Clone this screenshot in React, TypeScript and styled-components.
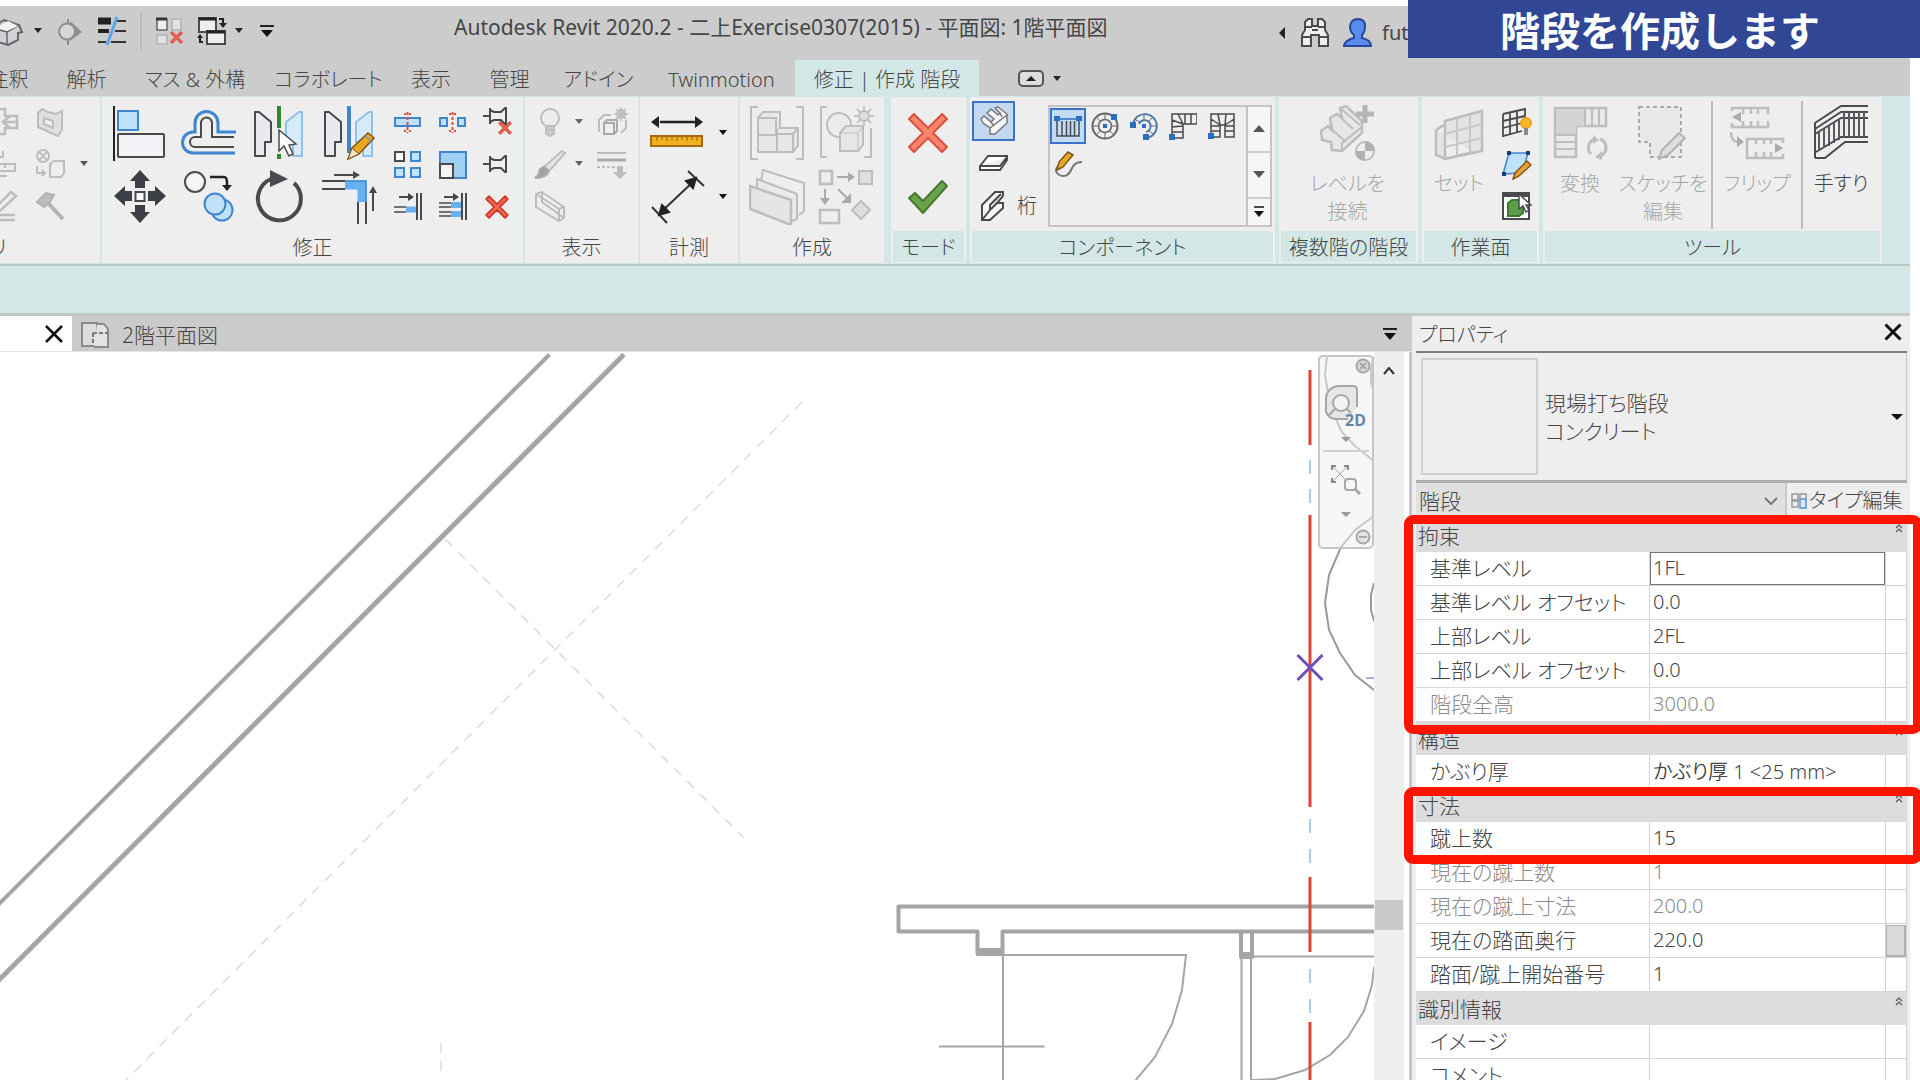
import React from "react";
import styled, { createGlobalStyle, css } from "styled-components";

const Global = createGlobalStyle`
  * { box-sizing: border-box; }
  html, body { margin: 0; padding: 0; background: #fff; }
  body { overflow: hidden; }
  button, input, select {
    font: inherit; color: inherit; margin: 0; padding: 0;
    border: 0; background: none; border-radius: 0; text-align: left;
  }
  body, button, input, select {
    font-family: "Noto Sans", "Noto Sans CJK JP", sans-serif;
    font-feature-settings: "palt";
  }
`;

const mint = "#d3e8e6";
const ink = "#454545";

const App = styled.div`
  position: relative;
  height: 100vh;
  overflow: hidden;
  padding: 6px 10px 0 0;
  display: flex;
  flex-direction: column;
  color: ${ink};
  font-size: 20px;
  line-height: 28px;
  font-weight: 300;
`;

/* ---------- title bar ---------- */
const TitleBar = styled.header`
  flex: none;
  height: 54px;
  display: flex;
  align-items: center;
  background: #cccccc;
`;
const QuickButton = styled.button<{ $w: number }>`
  flex: none;
  width: ${(p) => p.$w}px;
  height: 40px;
  display: flex;
  align-items: center;
  justify-content: center;
`;
const QuickTools = styled.div`
  flex: none;
  display: flex;
  align-items: center;
  width: 455px;
  margin: 0 0 4px -10px;
`;
const QuickRule = styled.span`
  width: 2px;
  height: 38px;
  margin-left: 4px;
  background: #bdbdbd;
`;
const WindowTitle = styled.h1`
  margin: 0 auto 12px 9px;
  font-size: 21px;
  line-height: 28px;
  font-weight: 400;
  white-space: nowrap;
`;
const Account = styled.div`
  flex: none;
  display: flex;
  align-items: center;
  width: 640px;
  span { padding-left: 2px; font-weight: 400; }
`;

/* ---------- tabs ---------- */
const Tabs = styled.nav`
  flex: none;
  height: 36px;
  display: flex;
  background: #cccccc;
`;
const TabStrip = styled.div`
  display: flex;
  margin-left: -31px;
`;
const Tab = styled.button<{ $w: number; $on?: boolean }>`
  flex: none;
  width: ${(p) => p.$w}px;
  text-align: center;
  white-space: nowrap;
  padding-top: 4px;
  font-weight: 300;
  background: ${(p) => (p.$on ? mint : "transparent")};
`;
const TabMenu = styled.button`
  display: flex;
  align-items: center;
  gap: 8px;
  margin-left: 39px;
  padding-top: 2px;
`;

/* ---------- ribbon ---------- */
const Ribbon = styled.section`
  flex: none;
  height: 170px;
  padding-top: 1px;
  display: flex;
  align-items: flex-start;
  gap: 2px;
  background: ${mint};
  border-bottom: 2px solid #b7c8c7;
`;
const ContextPanels = styled.div`
  display: flex;
  gap: 4px;
  margin-left: 5px;
`;
const PanelBox = styled.div<{ $w: number; $cut?: boolean }>`
  flex: none;
  width: ${(p) => p.$w}px;
  height: 166px;
  display: flex;
  flex-direction: column;
  background: #eeeeee;
  ${(p) => p.$cut && css`margin-left: -174px;`}
`;
const PanelBody = styled.div`
  height: 134px;
  display: flex;
  padding: 4px 3px 0 2px;
`;
const PanelTitle = styled.div<{ $context?: boolean }>`
  height: 31px;
  margin: 0 2px;
  text-align: center;
  white-space: nowrap;
  line-height: 34px;
  background: ${(p) => (p.$context ? mint : "transparent")};
`;
const BigGrid = styled.div<{ $cols: string }>`
  display: grid;
  grid-template-columns: ${(p) => p.$cols};
  grid-template-rows: 64px 64px;
`;
const SmallGrid = styled.div<{ $cols: string }>`
  display: grid;
  grid-template-columns: ${(p) => p.$cols};
  grid-template-rows: repeat(3, 42px);
`;
const ToolButton = styled.button`
  display: flex;
  align-items: center;
  justify-content: center;
`;
const Spacer = styled.span`
  flex: 1;
`;
const LabeledTool = styled.button<{ $w: number; $off?: boolean; $rule?: boolean }>`
  flex: none;
  width: ${(p) => p.$w}px;
  height: 128px;
  display: flex;
  flex-direction: column;
  align-items: center;
  text-align: center;
  white-space: pre-line;
  font-weight: 300;
  padding-top: 4px;
  color: ${(p) => (p.$off ? "#a6a6a6" : ink)};
  border-left: ${(p) => (p.$rule ? "2px solid #bebebe" : "0")};
  svg { flex: none; margin-bottom: 9px; }
`;
const ComponentList = styled.div`
  width: 76px;
  display: flex;
  flex-direction: column;
`;
const ComponentButton = styled.button<{ $on?: boolean }>`
  height: ${(p) => (p.$on ? 40 : 43)}px;
  width: ${(p) => (p.$on ? 43 : 74)}px;
  display: flex;
  align-items: center;
  gap: 8px;
  padding-left: 5px;
  ${(p) => p.$on && css`background: #c3d9f1; border: 2px solid #3a74c8; padding-left: 4px;`}
`;
const Gallery = styled.div`
  width: 224px;
  height: 122px;
  margin-top: 4px;
  display: flex;
  border: 2px solid #c4c4c4;
`;
const GalleryItems = styled.div`
  flex: 1;
  display: grid;
  grid-template-columns: 37px 39px 39px 39px 39px;
  grid-auto-rows: 39px;
  padding-top: 1px;
`;
const GalleryItem = styled.button<{ $on?: boolean }>`
  width: 36px;
  height: 36px;
  display: flex;
  align-items: center;
  justify-content: center;
  ${(p) => p.$on && css`background: #c3dcf5; border: 2px solid #3a74c8;`}
`;
const GalleryScroll = styled.div`
  width: 24px;
  display: grid;
  grid-template-rows: 44px 46px 1fr;
  border-left: 2px solid #c4c4c4;
  button {
    display: flex; align-items: center; justify-content: center;
    background: #f6f6f6;
  }
  button + button { border-top: 2px solid #cfcfcf; }
`;
const OptionsBar = styled.div`
  flex: none;
  height: 47px;
  background: ${mint};
`;

/* ---------- work area ---------- */
const Work = styled.main`
  flex: 1;
  min-height: 0;
  display: flex;
`;
const ViewColumn = styled.section`
  flex: 1;
  min-width: 0;
  display: flex;
  flex-direction: column;
`;
const DocBar = styled.div`
  flex: none;
  height: 39px;
  display: flex;
  background: #cbcbcb;
  border-top: 3px solid #c2c6c6;
  border-bottom: 1px solid #e4e4e4;
`;
const DocTab = styled.div<{ $on?: boolean }>`
  display: flex;
  align-items: center;
  gap: 12px;
  padding: 2px 0 0 8px;
  font-size: 21px;
  ${(p) =>
    p.$on &&
    css`width: 72px; background: #fff; justify-content: flex-end; padding-right: 9px;`}
`;
const DocMenu = styled.button`
  margin: 0 14px 0 auto;
`;
const ViewRow = styled.div`
  flex: 1;
  min-height: 0;
  display: flex;
`;
const Canvas = styled.div`
  position: relative;
  flex: 1;
  min-width: 0;
  background: #fff;
  > svg { display: block; width: 100%; height: 100%; }
`;
const NavBar = styled.div`
  position: absolute;
  top: 3px;
  right: 0;
  width: 56px;
  height: 194px;
  border: 2px solid #c6c6c6;
  border-radius: 5px;
  background: rgba(238, 238, 238, 0.55);
  svg { display: block; }
`;
const ScrollBar = styled.div`
  flex: none;
  width: 30px;
  display: flex;
  flex-direction: column;
  align-items: center;
  background: #efefef;
`;
const ScrollUp = styled.button`
  width: 30px;
  height: 38px;
  display: flex;
  align-items: center;
  justify-content: center;
`;
const ScrollThumb = styled.span`
  width: 28px;
  height: 30px;
  margin-top: 510px;
  background: #c9c9c9;
`;
const Splitter = styled.div`
  flex: none;
  width: 8px;
  background: #fff;
  border-right: 3px solid #c8c8cb;
`;

/* ---------- properties ---------- */
const Properties = styled.aside`
  flex: none;
  width: 498px;
  display: flex;
  flex-direction: column;
  padding: 0 3px 0 4px;
  background: #eeeeee;
  border-top: 3px solid #c6c8c8;
`;
const PropHeader = styled.div`
  flex: none;
  height: 37px;
  display: flex;
  align-items: center;
  justify-content: space-between;
  padding: 2px 4px 0 3px;
  border-bottom: 2px solid #7d7d7d;
  h2 { margin: 0; font-size: 20px; font-weight: 300; }
`;
const TypeButton = styled.button`
  flex: none;
  height: 130px;
  display: flex;
  align-items: center;
  padding: 0 3px 0 5px;
  border: solid #c4c4c4;
  border-width: 0 1px 3px 0;
  border-bottom-color: #adadad;
`;
const Thumb = styled.span`
  width: 117px;
  height: 117px;
  margin-right: 7px;
  border: 2px solid #cfcfcf;
`;
const TypeName = styled.span`
  flex: 1;
  font-weight: 300;
  line-height: 28px;
  font-size: 21px;
`;
const FilterRow = styled.div`
  flex: none;
  height: 36px;
  display: flex;
`;
const FilterBox = styled.label`
  flex: 1;
  display: flex;
  align-items: center;
  padding: 0 7px 0 3px;
  background: #e0e0e0;
  border-right: 2px solid #c9c9c9;
  select { flex: 1; appearance: none; font-weight: 300; font-size: 21px; outline: 0; }
`;
const EditType = styled.button`
  width: 120px;
  display: flex;
  align-items: center;
  gap: 2px;
  padding-left: 4px;
  font-weight: 300;
  white-space: nowrap;
`;
const TableWrap = styled.div`
  position: relative;
  flex: 1;
`;
const PropTable = styled.table`
  width: 100%;
  table-layout: fixed;
  border-collapse: separate;
  border-spacing: 0;
  background: #fff;
`;
const Section = styled.th`
  height: 33px;
  padding: 0 0 0 2px;
  text-align: left;
  font-weight: 300;
  font-size: 21px;
  line-height: 28px;
  background: #dcdcdc;
  div { display: flex; justify-content: space-between; align-items: center; height: 33px; }
  svg { margin: 0 4px 16px 0; }
`;
const Name = styled.th<{ $off?: boolean }>`
  height: 34px;
  padding: 0 0 2px 14px;
  text-align: left;
  font-weight: 300;
  font-size: 21px;
  line-height: 28px;
  white-space: nowrap;
  border-bottom: 1px solid #d9d9d9;
  color: ${(p) => (p.$off ? "#8b8b8b" : ink)};
`;
const Value = styled.td<{ $off?: boolean; $active?: boolean }>`
  height: 34px;
  padding: 0;
  border-left: 1px solid #d3d3d3;
  border-bottom: 1px solid #d9d9d9;
  color: ${(p) => (p.$off ? "#8b8b8b" : ink)};
  input {
    display: block; width: 100%; height: 33px; padding: 0 0 2px 3px;
    font-weight: 350; outline: 0;
    ${(p) => p.$active && css`border: 1px solid #757575; padding-left: 2px;`}
  }
`;
const Extra = styled.td`
  padding: 0;
  border: solid #d3d3d3;
  border-width: 0 1px 1px 1px;
  button {
    display: block; width: 100%; height: 32px;
    background: #dadada; border: solid #b0b0b0; border-width: 1px 2px 2px 1px;
  }
`;
const Highlight = styled.div<{ $top: number; $h: number }>`
  position: absolute;
  left: -12px;
  right: -15px;
  top: ${(p) => p.$top}px;
  height: ${(p) => p.$h}px;
  border: 9px solid #ff1400;
  border-radius: 9px;
  pointer-events: none;
`;
const Caption = styled.div`
  position: absolute;
  top: 0;
  right: 0;
  width: 512px;
  height: 58px;
  padding: 6px 8px 0 0;
  text-align: center;
  font-size: 40px;
  line-height: 50px;
  font-weight: 700;
  font-feature-settings: normal;
  color: #fff;
  background: #314796;
`;

/* ---------- icons ---------- */
type IcProps = { w?: number; h?: number; children: React.ReactNode };
const Ic = ({ w = 32, h = w, children }: IcProps) => (
  <svg width={w} height={h} viewBox={`0 0 ${w} ${h}`} fill="none" stroke="#4a4a4e" strokeWidth="2" aria-hidden="true">
    {children}
  </svg>
);
const Down = ({ c = "#222" }: { c?: string }) => (
  <Ic w={10} h={6}><path d="M1 0H9L5 5Z" fill={c} stroke="none" /></Ic>
);
const Up = () => <Ic w={12} h={8}><path d="M0 7H12L6 0Z" fill="#555" stroke="none" /></Ic>;
const MenuDown = () => (
  <Ic w={16} h={14}><path d="M1 2H15" strokeWidth="2" stroke="#222" /><path d="M2 6H14L8 13Z" fill="#111" stroke="none" /></Ic>
);
const Cross = () => (
  <Ic w={20}><path d="M2.500 2.500L17.500 17.500M17.500 2.500L2.500 17.500" stroke="#111" strokeWidth="3" /></Ic>
);
const g = "#bdbdbd";
const blue = "#3f86cf";
const pale = "#bfe2f8";

const Align = () => (
  <Ic w={56}><path d="M3 1V56" stroke="#222" /><rect x="7" y="6" width="20" height="19" fill={pale} stroke={blue} />
    <rect x="7" y="29" width="46" height="23" rx="1" fill="#f3f3f7" /></Ic>
);
const Offset = () => (
  <Ic w={56}><path d="M55 27H37V18A11.500 11.500 0 0 0 14 18V27H12A10.500 10.500 0 0 0 12 48H54" stroke={blue} strokeWidth="3" />
    <path d="M53 32H31V18A5.500 5.500 0 0 0 20 18V32H14A5 5 0 0 0 14 42H53" /></Ic>
);
const HalfShapes = () => (
  <>
    <path d="M4 51V7H8L20 17V37H14V51Z" fill="#e9e9ee" strokeLinejoin="round" />
    <path d="M51 51V7H48L35 17V37H42V51Z" fill="#d5ebf8" stroke="#8fc0ea" strokeLinejoin="round" />
  </>
);
const MirrorPick = () => (
  <Ic w={56}><HalfShapes /><path d="M28 1V23M28 49V54" stroke="#2f8a2b" strokeWidth="4" />
    <path d="M28 25V46L33 41L38 51L42 49L38 40L45 39Z" fill="#fff" strokeWidth="1.500" /></Ic>
);
const MirrorDraw = () => (
  <Ic w={56}><HalfShapes /><path d="M28 1V48" stroke={blue} strokeWidth="4" />
    <path d="M27 54L31 43L47 28L53 33L38 49Z" fill="#e9a821" stroke="#7c5315" strokeWidth="1.500" />
    <path d="M27 54L31 43L38 49Z" fill="#f5e2bd" stroke="#7c5315" strokeWidth="1" /><path d="M44 31L50 36" stroke="#999" /></Ic>
);
const Move = () => (
  <Ic w={56}><path d="M29 1L39 12H34V19H24V12H19ZM29 54L39 43H34V36H24V43H19ZM3 27L14 17V22H21V32H14V37ZM55 27L44 17V22H37V32H44V37Z" fill="#3c3f46" stroke="none" />
    <rect x="24.500" y="23" width="9" height="9" fill="#fff" /></Ic>
);
const Copy = () => (
  <Ic w={56}><circle cx="14" cy="13" r="10" fill="#f5f5f5" /><path d="M29 8H43Q46 8 46 14V18" stroke="#222" strokeWidth="2.500" /><path d="M41 16H51L46 22Z" fill="#222" stroke="none" />
    <circle cx="41" cy="41" r="10.500" fill={pale} stroke={blue} /><circle cx="34" cy="35" r="10.500" fill={pale} stroke={blue} /></Ic>
);
const Rotate = () => (
  <Ic w={56}><path d="M43 14A21.500 21.500 0 1 1 20 10" strokeWidth="4" /><path d="M19 1V18L37 10Z" fill="#4a4a4e" stroke="none" /></Ic>
);
const Trim = () => (
  <Ic w={56}><path d="M1 12H24M1 20H24M37 33V55M45 33V55" /><path d="M24 16H41V33" stroke="#67b0f2" strokeWidth="9" /><path d="M24 12H45V33" stroke={blue} strokeWidth="1.500" />
    <path d="M13 6H34M52 42V22" strokeWidth="2" /><path d="M32 2L39 6L32 10ZM48 24L52 17L56 24Z" fill="#4a4a4e" stroke="none" /></Ic>
);
const Split = ({ gap }: { gap?: boolean }) => (
  <Ic>{gap ? (<><rect x="4" y="12" width="7" height="8" fill={pale} stroke={blue} /><rect x="22" y="12" width="7" height="8" fill={pale} stroke={blue} /></>)
    : (<rect x="4" y="12" width="25" height="8" fill={pale} stroke={blue} />)}
    <path d="M16.500 6V27" stroke="#d5503f" strokeDasharray="3 2" /><path d="M13 8H20M13 25H20" stroke="#d5503f" strokeDasharray="2 3" /></Ic>
);
const RedX = ({ x = 0, y = 0, s = 1 }: { x?: number; y?: number; s?: number }) => (
  <path transform={`translate(${x} ${y}) scale(${s})`} d="M4 1L12 9L20 1L23 4L15 12L23 20L20 23L12 15L4 23L1 20L9 12L1 4Z" fill="#f4664f" stroke="#c9301f" strokeWidth="1.500" strokeLinejoin="round" />
);
const Pin = ({ x }: { x?: boolean }) => (
  <Ic><g transform={x ? "translate(0 -6)" : undefined}><path d="M2 16H9M9 8V24M9 10L13 12H20L24 8H25V24H24L20 20H13L9 22" fill="#eee" /></g>{x && <RedX x={17} y={15} s={0.58} />}</Ic>
);
const ArrayIc = () => (
  <Ic><rect x="4" y="4" width="9" height="9" fill="#fff" /><rect x="20" y="4" width="9" height="9" fill={pale} stroke={blue} />
    <rect x="4" y="20" width="9" height="9" fill={pale} stroke={blue} /><rect x="20" y="20" width="9" height="9" fill={pale} stroke={blue} /></Ic>
);
const Scale = () => (
  <Ic><rect x="4" y="4" width="26" height="26" fill="#9fd0f3" stroke={blue} /><rect x="4" y="16" width="13" height="14" fill="#f3f3f3" /></Ic>
);
const TrimOne = ({ two }: { two?: boolean }) => (
  <Ic><path d="M26 3V30M30 3V30M8 7H19" /><path d="M17 3L23 7L17 11Z" fill="#444" stroke="none" />
    <path d={two ? "M3 13H15M3 17H15M3 22H15M3 26H15" : "M3 17H15M3 22H15"} strokeWidth="1.500" />
    <path d={two ? "M15 15H25M15 24H25" : "M15 19.500H25"} stroke="#67b0f2" strokeWidth="6" /></Ic>
);
const Delete = () => <Ic><RedX x={4} y={5} s={1} /></Ic>;

/* disabled geometry tools */
const Cope = () => <Ic><path d="M2 3H14V10H26V22H14V28H2M19 10L12 16L19 22M12 16H26" stroke={g} strokeWidth="2.500" /></Ic>;
const Paint = () => <Ic><path d="M4 7L8 3L14 6L22 8L28 5V24L24 30L4 21Z" fill="#e0e0e0" stroke={g} /><path d="M10 12L19 15V22L10 18Z" stroke={g} fill="#eee" /></Ic>;
const Cut = () => <Ic><path d="M4 3V9H12V3M2 16H24V23H2ZM8 16V20M14 16V20M4 28H16" stroke={g} /></Ic>;
const Join = () => <Ic><circle cx="9" cy="8" r="6" stroke={g} /><path d="M5 4L13 12M13 4L5 12M3 18V25H10M8 22L11 25L8 28M17 15L20 13H30V25L27 29H16V17Z" stroke={g} /></Ic>;
const Sketch = () => <Ic><path d="M4 18L20 2L25 6L9 21L3 23ZM1 25H24M1 30H24" stroke={g} strokeWidth="2.500" /></Ic>;
const Hammer = () => <Ic><path d="M3 12L12 3L20 5L16 12L10 17Z" fill={g} stroke="#b2b2b2" /><path d="M14 13L29 29" stroke="#b2b2b2" strokeWidth="4" /></Ic>;

/* view tools */
const Bulb = () => <Ic><circle cx="16" cy="12" r="9" stroke={g} fill="#ececec" /><path d="M12 20H20V28L16 30L12 28ZM12 24H20" stroke={g} fill="#ccc" /></Ic>;
const Cubes = () => <Ic><path d="M8 17L11 14H21V25L18 28H8ZM8 17H18V28" stroke="#a9a9a9" /><path d="M3 26V14L8 9H15M25 27L30 22V14" stroke={g} /><circle cx="25" cy="8" r="4" fill="#d5d5d5" stroke={g} /><path d="M25 1V15M18 8H32M20 3L30 13M30 3L20 13" stroke={g} strokeWidth="1.500" /></Ic>;
const Brush = () => <Ic><path d="M1 30Q5 28 6 21L11 18L15 23Q12 30 1 30Z" fill="#a2a2a2" stroke="#aaa" /><path d="M11 18L28 3L31 5L16 22" fill="#e5e5e5" stroke={g} /></Ic>;
const LineWork = () => <Ic><path d="M1 5H30" stroke={g} /><path d="M1 12H30" stroke="#aaa" strokeWidth="3" /><path d="M1 19H24" stroke={g} strokeDasharray="3 2" /><path d="M21 18H27V24H31L24 31L17 24H21Z" fill={g} stroke="none" /></Ic>;
const SectionBox = () => <Ic><path d="M2 4L8 2L30 17V28L25 31L2 17ZM2 4L25 19V31M25 19L30 17M8 2V12L30 28" stroke={g} /></Ic>;
const Ruler = () => (
  <Ic w={56}><path d="M10 17H46" stroke="#222" strokeWidth="2.500" /><path d="M1 17L9 11V23ZM53 17L45 11V23Z" fill="#222" stroke="none" />
    <rect x="1" y="31" width="51" height="10" fill="#efb11f" stroke="#a5690f" /><path d="M7 32V36M12 32V35M17 32V36M22 32V35M27 32V36M32 32V35M37 32V36M42 32V35M47 32V36" stroke="#8d5b10" strokeWidth="1" /></Ic>
);
const Measure = () => (
  <Ic w={56}><path d="M10 44L44 12M2 38L17 54M38 2L54 17" stroke="#333" strokeWidth="2" /><path d="M9 46L12 36L19 43ZM46 9L36 12L43 19Z" fill="#222" stroke="#222" /></Ic>
);
const Group = () => <Ic w={56}><path d="M9 13L14 7H31V23H49V41L44 47H9Z" fill="#e7e7e7" stroke="none" /><path d="M9 2H2V54H9M47 2H54V54H47M9 13L14 7H31V23H49V41L44 47H9ZM9 30H28M28 47V23M9 13H27V30M28 29H44V47M44 29L49 23" stroke={g} /></Ic>;
const Similar = () => (
  <Ic w={56}><path d="M9 2H3V52H9M46 52H53V23" stroke={g} /><circle cx="21" cy="20" r="12" stroke={g} fill="#ececec" /><path d="M22 28L28 21H45V40L40 46H22Z" fill="#e6e6e6" stroke={g} /><path d="M22 28H40V46M40 28L45 21" stroke={g} strokeWidth="1" />
    <path d="M46 1V21M36 11H56M39 4L53 18M53 4L39 18" stroke="#c4c4c4" /><circle cx="46" cy="11" r="5" fill="#ddd" stroke={g} /></Ic>
);
const Assembly = () => <Ic w={56}><path d="M12 12L14 1L55 14V42L50 46" fill="#eee" stroke={g} /><path d="M8 18V10L48 25V50L43 52" fill="#eaeaea" stroke={g} /><path d="M1 17L42 31V56L1 40Z" fill="#e5e5e5" stroke={g} strokeWidth="2.500" /></Ic>;
const Parts = () => <Ic w={56}><path d="M2 2H14V15H2ZM2 41H21V54H2Z" stroke={g} strokeWidth="2.500" /><path d="M41 2H54V15H41ZM43 32L52 41L43 50L34 41Z" fill="#dedede" stroke={g} /><path d="M19 8H32M7 20V30M20 20L30 30" stroke="#aaa" /><path d="M30 3L37 8L30 13ZM2 29H12L7 36ZM33 24V34H23Z" fill="#aaa" stroke="none" /></Ic>;
const Cancel = () => <Ic w={40}><path d="M6 1L20 15L34 1L39 6L25 20L39 34L34 39L20 25L6 39L1 34L15 20L1 6Z" fill="#fa846c" stroke="#d8503f" strokeLinejoin="round" /></Ic>;
const Finish = () => <Ic w={40}><path d="M1 21L7 16L15 24L34 4L39 9L15 36Z" fill="#6ca34c" stroke="#467a2e" strokeLinejoin="round" /></Ic>;

/* stair components */
const Run = () => <Ic><path d="M3 14L6 11L13 17L16 14L9 8L13 4L20 10L22 8L17 3L20 2L29 9V18L17 29H12V23L5 18Z" fill="#f6f6f6" stroke="#77777b" strokeWidth="1.500" /><path d="M12 23L29 10M13 17L15 20M22 8L24 12" stroke="#77777b" strokeWidth="1.500" /></Ic>;
const Landing = () => <Ic><path d="M3 19L11 9H30V13L23 23H3ZM3 19H23L30 10" fill="#fff" /></Ic>;
const Support = () => <Ic><path d="M5 15L18 2H26V6L20 13H26V18L13 30H5Z" fill="#f6f6f8" /><path d="M5 30L13 20V15L24 4M13 20L20 13" /></Ic>;
const Straight = () => <Ic w={28}><path d="M3 8V24H25V8M8 9V24M12.500 9V24M16.500 9V24M20.500 9V24" strokeWidth="1.500" /><path d="M2 7H26" stroke="#2a6fbd" strokeWidth="1.500" /><path d="M0 4H6V9H0ZM22 4H28V9H22Z" fill="#2a6fbd" stroke="none" /></Ic>;
const Spiral = () => <Ic w={28}><g stroke="#666"><circle cx="14" cy="14" r="12.500" /><circle cx="14" cy="14" r="6.500" strokeWidth="1.500" /><path d="M14 2V8M14 20V26M2 14H8M20 14H26M6 6L10 10M6 22L10 18M22 22L18 18" strokeWidth="1" /></g><path d="M20 2H26V8H20ZM12 12H16V16H12Z" fill="#2a6fbd" stroke="none" /></Ic>;
const CenterEnds = () => <Ic w={28}><path d="M3 12A12 12 0 1 1 16 26M9 12A6 6 0 1 1 16 20" stroke="#4a79ad" strokeWidth="1.800" /><path d="M4 7L10 10M14 2V8M22 6L18 10M26 14H20M23 22L18 18" stroke="#666" strokeWidth="1" /><path d="M0 10H6V16H0ZM13 22H19V28H13ZM12 12H16V16H12Z" fill="#2a6fbd" stroke="none" /></Ic>;
const LWinder = () => <Ic w={28}><path d="M3 24V2H28V12H14V26H6M3 8L14 12M3 15L14 14M3 20H14M9 2L14 12M16 2V12M22 2V12" strokeWidth="1.500" /><path d="M0 22H6V28H0Z" fill="#2a6fbd" stroke="none" /></Ic>;
const UWinder = () => <Ic w={28}><path d="M3 24V2H26V25H17V13H12V25H6M3 14H12M3 19H12M17 14H26M17 19H26M3 7L12 13M10 2L12 13M18 2L17 13M26 7L17 13" strokeWidth="1.500" /><path d="M0 21H6V27H0Z" fill="#2a6fbd" stroke="none" /></Ic>;
const SketchRun = () => <Ic w={28}><path d="M5 14C-1 19 3 25 10 25C19 25 15 11 28 11" stroke="#777" /><path d="M3 19L5 11L14 1L19 4L9 16Z" fill="#e9a821" stroke="#7c5315" strokeWidth="1.500" /></Ic>;

/* labelled tools */
const ConnectLevels = () => (
  <Ic w={56}><path d="M1 26L8 21L12 25L10 13L17 9L22 13L20 3L26 1L42 16V28L22 46L12 45L11 37L2 35Z" fill="#e6e6e6" stroke={g} strokeWidth="2.500" /><path d="M8 21L26 37M17 9L33 24M20 3L40 20M22 46L22 38L42 22" stroke={g} />
    <path d="M36 9H54M45 0V18" stroke="#b5b5b5" strokeWidth="5" /><circle cx="45" cy="46" r="9" stroke={g} fill="#eee" /><path d="M45 46V36A10 10 0 0 1 55 46ZM45 46V56A10 10 0 0 1 35 46Z" fill="#b0b0b0" stroke="none" /></Ic>
);
const SetPlane = () => <Ic w={56}><path d="M5 25L13 20M5 25V50L14 54L42 47M14 16L51 6V46L14 54Z" fill="#e4e4e4" stroke={g} strokeWidth="2.500" /><path d="M14 29L51 19M14 42L51 33M26 13V51M39 10V48" stroke="#c8c8c8" /></Ic>;
const ShowPlane = () => <Ic><path d="M3 8L25 3V17M3 8V30L22 25M3 15L25 10M3 22L22 17M10 6V28M17 5V26" strokeWidth="1.800" /><circle cx="26" cy="17" r="5" fill="#fbb829" stroke="#f0a020" /><path d="M26 22V29" stroke="#8a8a8a" strokeWidth="4" /></Ic>;
const RefPlane = () => <Ic><path d="M9 5H28L22 25L3 26Z" fill={pale} stroke={blue} strokeWidth="1.500" /><path d="M7 3H11V7H7ZM26 3H30V7H26ZM2 24H6V28H2Z" fill="#1c3f75" stroke="none" /><path d="M13 31L15 25L27 13L31 17L19 28Z" fill="#e6a03a" stroke="#8a5618" strokeWidth="1.500" /></Ic>;
const Viewer = () => <Ic><rect x="3" y="3" width="26" height="26" fill="#fff" /><path d="M3 5H29" strokeWidth="4" /><path d="M8 13L12 10H23V23L19 26H8Z" fill="#5e9e4a" stroke="#397a2f" /><path d="M19 4V19L23 16L26 22L29 20L26 15H31Z" fill="#fff" strokeWidth="1.500" /></Ic>;
const Convert = () => <Ic w={56}><path d="M3 3H54V21H24V52H3Z" fill="#e9e9e9" stroke={g} strokeWidth="2.500" /><path d="M4 4H33V21H24V30H4Z" fill="#d3d3d3" stroke="none" /><path d="M33 3V21M40 3V21M47 3V21M3 30H24M3 37H24M3 44H24" stroke={g} /><path d="M39 49A9 9 0 0 1 43 34M48 34A9 9 0 0 1 48 51" stroke={g} strokeWidth="3" /><path d="M41 30V39L47 35ZM50 46V55L43 52Z" fill={g} stroke="none" /></Ic>;
const EditSketch = () => <Ic w={56}><path d="M4 2H46V52H15V37H4Z" stroke="#aaa" strokeDasharray="4 3" fill="#e8e8e8" /><path d="M24 54L27 45L44 28L50 33L33 50Z" fill="#ddd" stroke="#b2b2b2" /></Ic>;
const Flip = () => <Ic w={56}><path d="M39 9V3H3V6M3 18V22H39V16M14 3V9M22 3V9M29 3V9M14 22V16M22 22V16M29 22V16M54 38V34H18V53H54V49M27 34V39M35 34V39M42 34V39M27 47V53M35 47V53M42 47V53M2 27Q2 37 10 37" stroke={g} strokeWidth="2.500" /><path d="M3 12L12 7V17ZM54 43L46 38V48ZM8 31L15 37L8 42Z" fill="#aaa" stroke="none" /></Ic>;
const Railing = () => (
  <Ic w={56}><path d="M2 53V18L28 1H55M2 24L28 7H55M2 29L28 13H55M3 47L28 32H55M2 53H12L32 37H55" /><path d="M6 26V46M11 23V43M16 20V41M21 17V38M26 14V35M31 7V32M36 7V32M41 7V32M46 7V32M51 7V32" stroke="#5a5a60" /></Ic>
);

/* quick access */
const Home3D = () => <Ic w={36} h={30}><path d="M2 12L14 4L29 9L32 16L28 17V24L18 29L2 24Z" fill="#d2d2d6" stroke="#66666a" /><path d="M2 12L17 16L29 9M17 16V28" stroke="#66666a" strokeWidth="1.500" /><path d="M6 12L18 5L28 10L17 15Z" fill="#f4f4f4" stroke="none" /></Ic>;
const SectionMark = () => <Ic w={28}><path d="M13 2V6M13 23V28" stroke="#8e8e8e" /><path d="M15 4L27 15L15 24Z" fill="#8e8e8e" stroke="none" /><circle cx="12" cy="14.500" r="8" stroke="#8e8e8e" fill="#d6d6d6" /></Ic>;
const ThinLines = () => <Ic w={30}><path d="M1 5H14" stroke="#222" strokeWidth="7" /><path d="M1 15H12" stroke="#222" strokeWidth="4" /><path d="M1 26H9M20 5H29M18 15H29M14 26H29" stroke="#333" /><path d="M20 1L10 29" stroke="#59a5ee" strokeWidth="3" /></Ic>;
const CloseHidden = () => <Ic w={28}><rect x="2" y="2" width="10" height="11" fill="#eee" stroke="#666" strokeWidth="1.500" /><path d="M17 2H26V13H17ZM2 18H12V27H2Z" fill="#e2e2e2" stroke="#bbb" /><path d="M1 2H12" stroke="#333" strokeWidth="3" /><RedX x={15} y={14} s={0.54} /></Ic>;
const SwitchWin = () => <Ic w={30}><rect x="2" y="2" width="17" height="14" fill="#eee" /><rect x="10" y="15" width="18" height="13" fill="#eee" /><path d="M2 3H19M10 16H28" stroke="#222" strokeWidth="3" /><path d="M22 3H26V9M3 20V26H6" stroke="#222" /><path d="M22 7H30L26 12ZM0 22H6L3 18Z" fill="#222" stroke="none" /></Ic>;
const Binoculars = () => <Ic w={30}><path d="M5 4L8 1H12V8H18V1H22L25 4V12L28 17V28H19V17H11V28H2V17L5 12Z" fill="#eee" /><path d="M5 9H12M18 9H25M2 19H11M19 19H28M12 12H18" /></Ic>;
const User = () => <Ic w={30}><path d="M1 28Q2 22 11 20V17Q7 14 7 8Q8 1 15 1Q22 1 22 8Q22 14 19 17V20Q28 22 28 28Z" fill="#5a8ceb" stroke="#26489c" /></Ic>;
const Minimise = () => <Ic w={26} h={18}><rect x="1" y="1" width="24" height="15" rx="4" fill="#ddd" stroke="#555" /><path d="M8 11H18L13 6Z" fill="#222" stroke="none" /></Ic>;
const PlanIcon = () => <Ic w={30} h={28}><path d="M2 2H17V25H2Z" fill="#ddd" stroke="#8a8a8a" /><path d="M17 3H24L28 8V26H14" fill="#e3e3e3" stroke="#8a8a8a" /><path d="M13 12H28M13 12V24" stroke="#777" strokeDasharray="4 2" /></Ic>;
const TypeGrid = () => <Ic w={16}><path d="M1 1H7V7H1ZM9 1H15V7H9ZM1 8H7V14H1Z" stroke="#999" strokeWidth="1.500" /><rect x="9" y="6" width="6" height="9" stroke="#5b8fd0" fill="#dbe9fa" strokeWidth="1.500" /></Ic>;
const Fold = () => <Ic w={8} h={10}><path d="M1 5L4 2L7 5M1 9L4 6L7 9" strokeWidth="1.200" stroke="#555" /></Ic>;

const Drawing = () => (
  <svg viewBox="0 352 1374 728" preserveAspectRatio="xMaxYMin slice" fill="none" stroke="#a5a5a5" strokeWidth="2" aria-label="1階平面図">
    <g strokeWidth="4"><path d="M549.500 354.500L-2 905" /><path d="M624 354.500L-2 981" strokeWidth="5" /></g>
    <g stroke="#dcdcdc" strokeWidth="1.500" strokeDasharray="10 8"><path d="M445 539L744 838" /><path d="M802 402L126 1080" /><path d="M441 1043V1072" /></g>
    <path strokeWidth="4" strokeLinejoin="round" d="M1374 906.500H898.500V931.500H977.500V954H1002.500V931.500H1374M1241 931V957H1252V931" />
    <path strokeWidth="8" d="M977 952H1003" /><path strokeWidth="6" d="M1241 955H1252" />
    <path d="M1003 955H1186L1182 990L1172 1024L1155 1057L1135 1081M1003 956V1080M939 1046.500H1044.500M1241.500 958V1080M1251 958V1080M1253 956.500H1374M1374 967L1372 985L1364 1011L1348 1037L1330 1055L1305 1070L1275 1079L1252 1080" />
    <g stroke="#999"><path d="M1327 356L1325 375L1330 404L1341 431L1355 446L1374 461M1374 516L1355 530L1341 547L1329 575L1325 603L1329 630L1340 653L1355 675L1374 690M1374 583L1371 595V610L1374 621M1373 357L1371 370V383L1374 392" /></g>
    <path d="M1366 678H1374" stroke="#b5a8e8" />
    <path stroke="#a8cfe6" strokeWidth="2" d="M1310 460V474M1310 489V503M1310 819V833M1310 849V863M1310 969V983M1310 999V1013" />
    <path stroke="#de4238" strokeWidth="3" d="M1310 370V445M1310 515V807M1310 877V952M1310 1022V1080" />
    <path stroke="#6a4fc0" strokeWidth="3" d="M1297.500 655L1322.500 680M1322.500 655L1297.500 680" />
  </svg>
);
const NavDrawing = () => (
  <svg width="52" height="190" viewBox="0 0 52 190" fill="none" stroke="#a6a6a6" strokeWidth="2" aria-hidden="true">
    <circle cx="43" cy="9" r="6.500" fill="#d9d9d9" /><path d="M40 6L46 12M46 6L40 12" />
    <path d="M28 62H16A10 10 0 0 1 6 50V42A13 13 0 0 1 19 29H33Q37 29 37 33V50" fill="#e6e6e6" />
    <circle cx="21" cy="46" r="8" fill="#f3f3f3" /><path d="M15 52L9 58M27 52L31 56" />
    <text x="25" y="69" fontSize="16" fontWeight="700" fill="#6485ae" stroke="none">2D</text>
    <path d="M21 80H31L26 85ZM21 155H31L26 160Z" fill="#999" stroke="none" />
    <path d="M3 94H49" stroke="#cfcfcf" />
    <path d="M13 110L27 124M27 110L13 124" strokeWidth="1" /><path d="M12 113V109H16M24 109H28V113M12 121V125H16" stroke="#888" />
    <rect x="25" y="122" width="11" height="11" rx="3" /><path d="M35 132L40 137" strokeWidth="3" />
    <circle cx="43" cy="180" r="6.500" fill="#e3e3e3" /><path d="M39 180H47" />
  </svg>
);

/* ---------- data ---------- */
type Row = { name: string; value: string; off?: boolean; active?: boolean; browse?: boolean };
const sections: { title: string; rows: Row[] }[] = [
  { title: "拘束", rows: [
    { name: "基準レベル", value: "1FL", active: true },
    { name: "基準レベル オフセット", value: "0.0" },
    { name: "上部レベル", value: "2FL" },
    { name: "上部レベル オフセット", value: "0.0" },
    { name: "階段全高", value: "3000.0", off: true },
  ] },
  { title: "構造", rows: [{ name: "かぶり厚", value: "かぶり厚 1 <25 mm>" }] },
  { title: "寸法", rows: [
    { name: "蹴上数", value: "15" },
    { name: "現在の蹴上数", value: "1", off: true },
    { name: "現在の蹴上寸法", value: "200.0", off: true },
    { name: "現在の踏面奥行", value: "220.0", browse: true },
    { name: "踏面/蹴上開始番号", value: "1" },
  ] },
  { title: "識別情報", rows: [
    { name: "イメージ", value: "" },
    { name: "コメント", value: "" },
  ] },
];

const tabs: [string, number][] = [
  ["注釈", 79], ["解析", 77], ["マス & 外構", 140], ["コラボレート", 127], ["表示", 78], ["管理", 79], ["アドイン", 99], ["Twinmotion", 147],
];

type PanelProps = { title: string; w: number; context?: boolean; cut?: boolean; children: React.ReactNode };
const Panel = ({ title, w, context, cut, children }: PanelProps) => (
  <PanelBox $w={w} $cut={cut}>
    <PanelBody>{children}</PanelBody>
    <PanelTitle $context={context}>{title}</PanelTitle>
  </PanelBox>
);
const Tools = ({ items }: { items: [string, React.ReactNode][] }) => (
  <>
    {items.map(([label, icon], i) =>
      icon ? <ToolButton key={label} aria-label={label}>{icon}</ToolButton> : <span key={i} />,
    )}
  </>
);

export default function RevitWindow() {
  return (
    <App>
      <Global />
      <TitleBar>
        <QuickTools>
          <QuickButton $w={36} aria-label="3D ビュー"><Home3D /></QuickButton>
          <QuickButton $w={24} aria-label="3D メニュー"><Down /></QuickButton>
          <QuickButton $w={38} aria-label="断面"><SectionMark /></QuickButton>
          <QuickButton $w={48} aria-label="細線"><ThinLines /></QuickButton>
          <QuickRule />
          <QuickButton $w={54} aria-label="非表示を閉じる"><CloseHidden /></QuickButton>
          <QuickButton $w={32} aria-label="ウィンドウ切替"><SwitchWin /></QuickButton>
          <QuickButton $w={22} aria-label="ウィンドウ"><Down /></QuickButton>
          <QuickButton $w={34} aria-label="カスタマイズ"><MenuDown /></QuickButton>
        </QuickTools>
        <WindowTitle>Autodesk Revit 2020.2 - 二上Exercise0307(2015) - 平面図: 1階平面図</WindowTitle>
        <Account>
          <QuickButton $w={24} aria-label="検索欄"><Ic w={8} h={12}><path d="M7 0V12L1 6Z" fill="#222" stroke="none" /></Ic></QuickButton>
          <QuickButton $w={42} aria-label="検索"><Binoculars /></QuickButton>
          <QuickButton $w={44} aria-label="アカウント"><User /></QuickButton>
          <span>fut</span>
        </Account>
      </TitleBar>
      <Tabs>
        <TabStrip>
          {tabs.map(([t, w]) => <Tab key={t} $w={w}>{t}</Tab>)}
          <Tab $w={184} $on>修正 | 作成 階段</Tab>
        </TabStrip>
        <TabMenu aria-label="リボン表示"><Minimise /><Down /></TabMenu>
      </Tabs>
      <Ribbon>
        <Panel title="ジオメトリ" w={274} cut>
          <Spacer />
          <SmallGrid $cols="45px 42px 26px">
            <Tools items={[["コープ", <Cope />], ["ペイント", <Paint />], ["", null], ["切り取り", <Cut />], ["結合", <Join />], ["結合メニュー", <Down c="#555" />], ["分割", <Sketch />], ["解体", <Hammer />]]} />
          </SmallGrid>
        </Panel>
        <Panel title="修正" w={421}>
          <BigGrid $cols="repeat(4, 70px)">
            <Tools items={[["位置合わせ", <Align />], ["オフセット", <Offset />], ["鏡像化 選択", <MirrorPick />], ["鏡像化 描画", <MirrorDraw />], ["移動", <Move />], ["コピー", <Copy />], ["回転", <Rotate />], ["トリム", <Trim />]]} />
          </BigGrid>
          <SmallGrid $cols="repeat(3, 45px)">
            <Tools items={[["要素分割", <Split />], ["隙間で分割", <Split gap />], ["ピン解除", <Pin x />], ["配列", <ArrayIc />], ["尺度", <Scale />], ["ピン", <Pin />], ["単一延長", <TrimOne />], ["複数延長", <TrimOne two />], ["削除", <Delete />]]} />
          </SmallGrid>
        </Panel>
        <Panel title="表示" w={113}>
          <SmallGrid $cols="46px 12px 54px">
            <Tools items={[["表示", <Bulb />], ["表示メニュー", <Down c="#666" />], ["選択ボックス", <Cubes />], ["上書き", <Brush />], ["上書きメニュー", <Down c="#666" />], ["線種変更", <LineWork />], ["断面ボックス", <SectionBox />]]} />
          </SmallGrid>
        </Panel>
        <Panel title="計測" w={98}>
          <BigGrid $cols="72px 18px">
            <Tools items={[["計測", <Ruler />], ["計測メニュー", <Down c="#111" />], ["寸法", <Measure />], ["寸法メニュー", <Down c="#111" />]]} />
          </BigGrid>
        </Panel>
        <Panel title="作成" w={144}>
          <BigGrid $cols="70px 67px">
            <Tools items={[["グループ", <Group />], ["類似を作成", <Similar />], ["アセンブリ", <Assembly />], ["パーツ", <Parts />]]} />
          </BigGrid>
        </Panel>
        <ContextPanels>
          <Panel title="モード" w={75} context>
            <BigGrid $cols="70px">
              <Tools items={[["キャンセル", <Cancel />], ["完了", <Finish />]]} />
            </BigGrid>
          </Panel>
          <Panel title="コンポーネント" w={305} context>
            <ComponentList>
              <ComponentButton $on aria-label="階段経路"><Run /></ComponentButton>
              <ComponentButton aria-label="踊り場"><Landing /></ComponentButton>
              <ComponentButton><Support />桁</ComponentButton>
            </ComponentList>
            <Gallery>
              <GalleryItems>
                <GalleryItem $on aria-label="直線"><Straight /></GalleryItem>
                <GalleryItem aria-label="フルステップらせん"><Spiral /></GalleryItem>
                <GalleryItem aria-label="中心-両端らせん"><CenterEnds /></GalleryItem>
                <GalleryItem aria-label="L 字段折れ"><LWinder /></GalleryItem>
                <GalleryItem aria-label="U 字段折れ"><UWinder /></GalleryItem>
                <GalleryItem aria-label="スケッチ"><SketchRun /></GalleryItem>
              </GalleryItems>
              <GalleryScroll>
                <button aria-label="上へ"><Up /></button>
                <button aria-label="下へ"><Ic w={12} h={8}><path d="M0 0H12L6 7Z" fill="#555" stroke="none" /></Ic></button>
                <button aria-label="展開"><Ic w={12} h={12}><path d="M1 1H11" /><path d="M1 5H11L6 11Z" fill="#111" stroke="none" /></Ic></button>
              </GalleryScroll>
            </Gallery>
          </Panel>
          <Panel title="複数階の階段" w={139} context>
            <LabeledTool $w={133} $off><ConnectLevels />{"レベルを\n接続"}</LabeledTool>
          </Panel>
          <Panel title="作業面" w={117} context>
            <LabeledTool $w={70} $off><SetPlane />セット</LabeledTool>
            <SmallGrid $cols="43px">
              <Tools items={[["表示", <ShowPlane />], ["参照面", <RefPlane />], ["ビューア", <Viewer />]]} />
            </SmallGrid>
          </Panel>
          <Panel title="ツール" w={339} context>
            <LabeledTool $w={70} $off><Convert />変換</LabeledTool>
            <LabeledTool $w={96} $off><EditSketch />{"スケッチを\n編集"}</LabeledTool>
            <LabeledTool $w={90} $off $rule><Flip />フリップ</LabeledTool>
            <LabeledTool $w={78} $rule><Railing />手すり</LabeledTool>
          </Panel>
        </ContextPanels>
      </Ribbon>
      <OptionsBar />
      <Work>
        <ViewColumn>
          <DocBar>
            <DocTab $on><button aria-label="閉じる"><Ic w={18}><path d="M1 1L17 17M17 1L1 17" stroke="#111" strokeWidth="2.500" /></Ic></button></DocTab>
            <DocTab><PlanIcon />2階平面図</DocTab>
            <DocMenu aria-label="タブ一覧"><MenuDown /></DocMenu>
          </DocBar>
          <ViewRow>
            <Canvas>
              <Drawing />
              <NavBar><NavDrawing /></NavBar>
            </Canvas>
            <ScrollBar>
              <ScrollUp aria-label="上へスクロール"><Ic w={12} h={8}><path d="M1 7L6 1L11 7" stroke="#333" /></Ic></ScrollUp>
              <ScrollThumb />
            </ScrollBar>
            <Splitter />
          </ViewRow>
        </ViewColumn>
        <Properties>
          <PropHeader><h2>プロパティ</h2><button aria-label="プロパティを閉じる"><Cross /></button></PropHeader>
          <TypeButton>
            <Thumb />
            <TypeName>現場打ち階段<br />コンクリート</TypeName>
            <Ic w={12} h={8}><path d="M0 1H12L6 7Z" fill="#111" stroke="none" /></Ic>
          </TypeButton>
          <FilterRow>
            <FilterBox>
              <select aria-label="カテゴリ" defaultValue="階段"><option>階段</option></select>
              <Ic w={14} h={8}><path d="M1 1L7 7L13 1" stroke="#777" /></Ic>
            </FilterBox>
            <EditType><TypeGrid />タイプ編集</EditType>
          </FilterRow>
          <TableWrap>
            <PropTable>
              <colgroup><col /><col width="236" /><col width="22" /></colgroup>
              {sections.map((s) => (
                <tbody key={s.title}>
                  <tr><Section colSpan={3}><div>{s.title}<Fold /></div></Section></tr>
                  {s.rows.map((r) => (
                    <tr key={r.name}>
                      <Name scope="row" $off={r.off}>{r.name}</Name>
                      <Value $off={r.off} $active={r.active}><input aria-label={r.name} defaultValue={r.value} readOnly={r.off} /></Value>
                      <Extra>{r.browse && <button aria-label="参照" />}</Extra>
                    </tr>
                  ))}
                </tbody>
              ))}
            </PropTable>
            <Highlight $top={-4} $h={219} />
            <Highlight $top={268} $h={77} />
          </TableWrap>
        </Properties>
      </Work>
      <Caption>階段を作成します</Caption>
    </App>
  );
}
